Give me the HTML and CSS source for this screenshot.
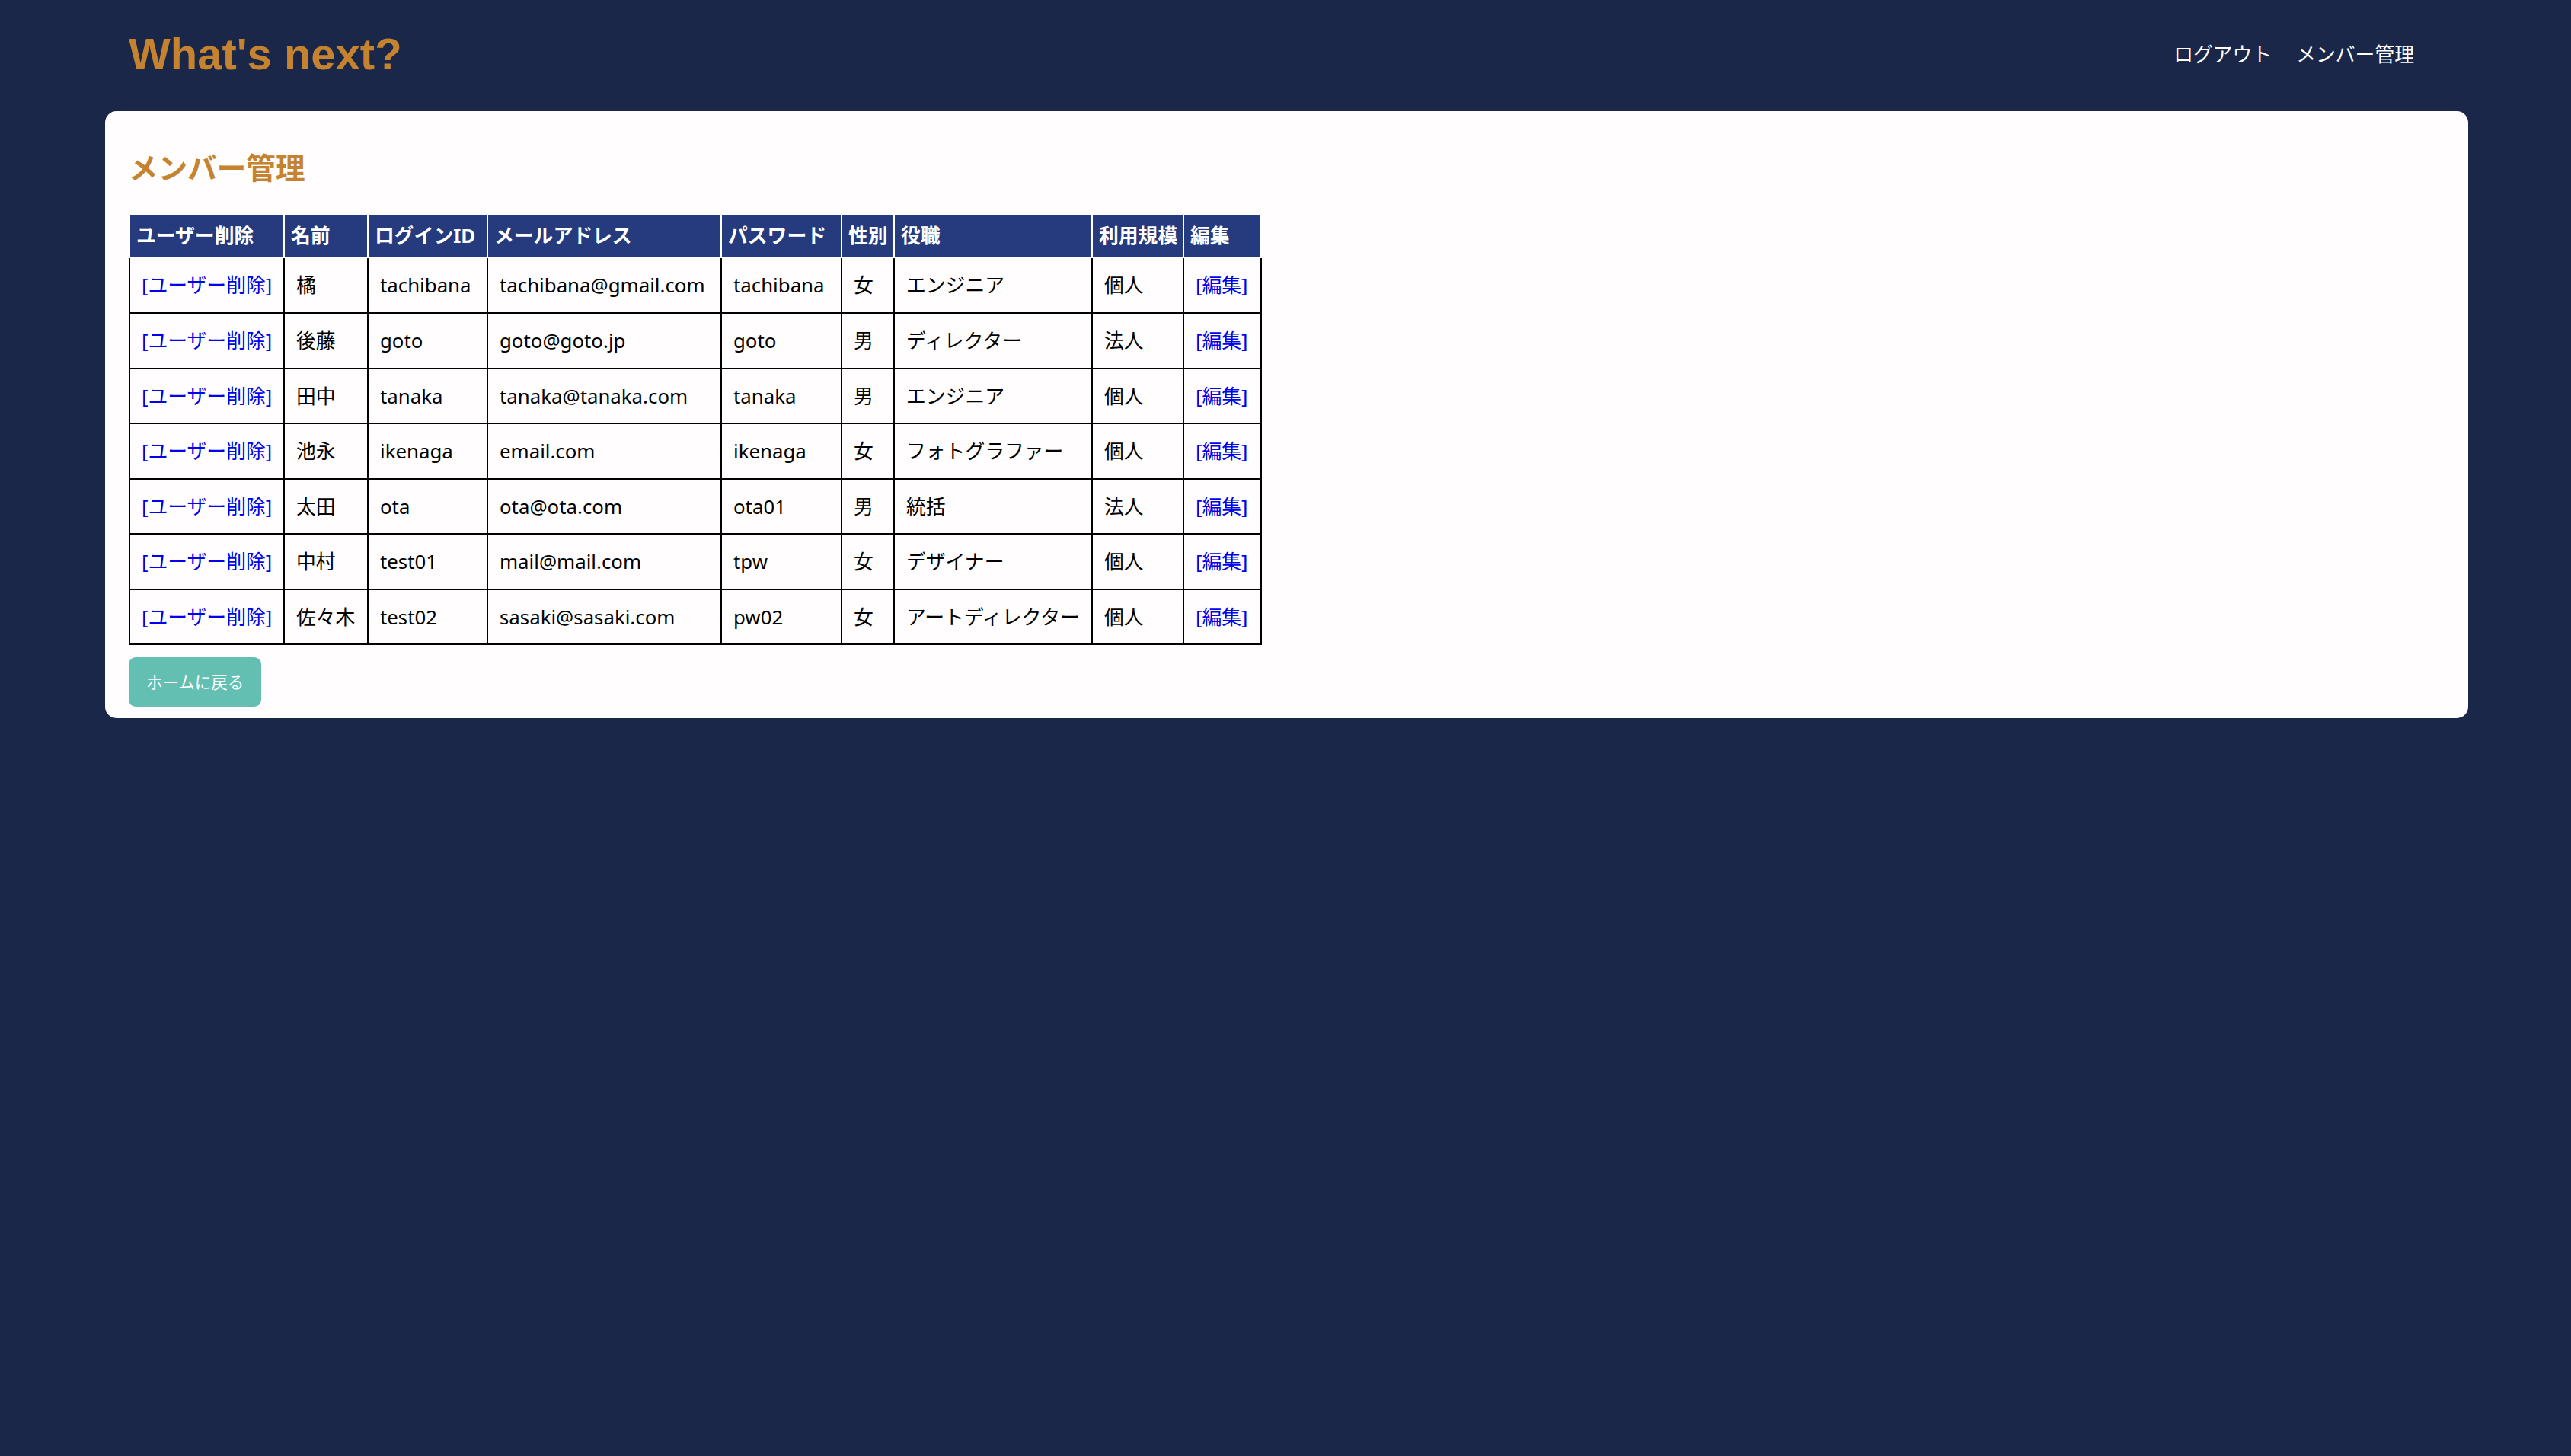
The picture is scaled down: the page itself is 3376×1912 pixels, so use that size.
FILE: index.html
```html
<!DOCTYPE html>
<html lang="ja">
<head>
<meta charset="utf-8">
<title>メンバー管理 | What's next?</title>
<link rel="stylesheet" href="styles.css">
</head>
<body>
<header class="site-header">
  <h1 class="logo">What's next?</h1>
  <nav class="nav">
    <a class="nav-link" href="#">ログアウト</a>
    <a class="nav-link" href="#">メンバー管理</a>
  </nav>
</header>
<main class="card">
  <h2 class="page-title">メンバー管理</h2>
  <table class="members">
    <colgroup>
      <col class="col-del">
      <col class="col-name">
      <col class="col-login">
      <col class="col-mail">
      <col class="col-pass">
      <col class="col-sex">
      <col class="col-role">
      <col class="col-scale">
      <col class="col-edit">
    </colgroup>
    <thead>
      <tr>
        <th>ユーザー削除</th>
        <th>名前</th>
        <th>ログインID</th>
        <th>メールアドレス</th>
        <th>パスワード</th>
        <th>性別</th>
        <th>役職</th>
        <th>利用規模</th>
        <th>編集</th>
      </tr>
    </thead>
    <tbody>
      <tr>
        <td><a class="link" href="#">[ユーザー削除]</a></td>
        <td>橘</td>
        <td>tachibana</td>
        <td>tachibana@gmail.com</td>
        <td>tachibana</td>
        <td>女</td>
        <td>エンジニア</td>
        <td>個人</td>
        <td><a class="link" href="#">[編集]</a></td>
      </tr>
      <tr>
        <td><a class="link" href="#">[ユーザー削除]</a></td>
        <td>後藤</td>
        <td>goto</td>
        <td>goto@goto.jp</td>
        <td>goto</td>
        <td>男</td>
        <td>ディレクター</td>
        <td>法人</td>
        <td><a class="link" href="#">[編集]</a></td>
      </tr>
      <tr>
        <td><a class="link" href="#">[ユーザー削除]</a></td>
        <td>田中</td>
        <td>tanaka</td>
        <td>tanaka@tanaka.com</td>
        <td>tanaka</td>
        <td>男</td>
        <td>エンジニア</td>
        <td>個人</td>
        <td><a class="link" href="#">[編集]</a></td>
      </tr>
      <tr>
        <td><a class="link" href="#">[ユーザー削除]</a></td>
        <td>池永</td>
        <td>ikenaga</td>
        <td>email.com</td>
        <td>ikenaga</td>
        <td>女</td>
        <td>フォトグラファー</td>
        <td>個人</td>
        <td><a class="link" href="#">[編集]</a></td>
      </tr>
      <tr>
        <td><a class="link" href="#">[ユーザー削除]</a></td>
        <td>太田</td>
        <td>ota</td>
        <td>ota@ota.com</td>
        <td>ota01</td>
        <td>男</td>
        <td>統括</td>
        <td>法人</td>
        <td><a class="link" href="#">[編集]</a></td>
      </tr>
      <tr>
        <td><a class="link" href="#">[ユーザー削除]</a></td>
        <td>中村</td>
        <td>test01</td>
        <td>mail@mail.com</td>
        <td>tpw</td>
        <td>女</td>
        <td>デザイナー</td>
        <td>個人</td>
        <td><a class="link" href="#">[編集]</a></td>
      </tr>
      <tr>
        <td><a class="link" href="#">[ユーザー削除]</a></td>
        <td>佐々木</td>
        <td>test02</td>
        <td>sasaki@sasaki.com</td>
        <td>pw02</td>
        <td>女</td>
        <td>アートディレクター</td>
        <td>個人</td>
        <td><a class="link" href="#">[編集]</a></td>
      </tr>
    </tbody>
  </table>
  <button class="btn-home" type="button">ホームに戻る</button>
</main>
</body>
</html>
```
FILE: styles.css
```css
html {
  background: #1b2749;
}

body {
  margin: 0;
  min-height: 1912px;
  font-family: "Noto Sans", "Noto Sans CJK JP", sans-serif;
  color: #000;
}

.site-header {
  height: 146px;
  box-sizing: border-box;
  padding: 0 206px 4px 169px;
  display: flex;
  align-items: center;
  justify-content: space-between;
}

.logo {
  margin: 0;
  font-family: "Liberation Sans", "Noto Sans CJK JP", sans-serif;
  font-size: 58px;
  line-height: 1;
  font-weight: 700;
  color: #c5832f;
}

.nav {
  display: flex;
  gap: 32px;
  font-size: 25.8px;
  line-height: 1.2;
}

.nav-link {
  color: #fff;
  text-decoration: none;
}

.card {
  margin: 0 135px 0 138px;
  background: #fffdfd;
  border-radius: 15px;
  padding: 51px 31px 15px;
}

.page-title {
  margin: 0 0 37px;
  font-size: 38.6px;
  line-height: 1.2;
  font-weight: 700;
  color: #c5832f;
}

.members {
  border-collapse: collapse;
  table-layout: fixed;
  width: 1488px;
  font-size: 25.8px;
}

.col-del { width: 203px; }
.col-name { width: 110px; }
.col-login { width: 157px; }
.col-mail { width: 307px; }
.col-pass { width: 158px; }
.col-sex { width: 69px; }
.col-role { width: 260px; }
.col-scale { width: 120px; }
.col-edit { width: 102px; }

.members th {
  background: #253b7d;
  color: #fff;
  font-weight: 700;
  text-align: left;
  border: 2px solid #fff;
  padding: 0 8px;
  line-height: 55px;
  white-space: nowrap;
  overflow: visible;
}

.members td {
  border: 2px solid #000;
  padding: 0 15px;
  line-height: 70.6px;
  white-space: nowrap;
  overflow: visible;
}

.link {
  color: #0000ee;
  text-decoration: none;
}

.btn-home {
  display: block;
  margin-top: 16px;
  height: 65px;
  padding: 0 23px;
  border: 0;
  border-radius: 9px;
  background: #62bfb1;
  color: #fff;
  font-family: "Noto Sans", "Noto Sans CJK JP", sans-serif;
  font-size: 21.5px;
  line-height: 65px;
}
```
